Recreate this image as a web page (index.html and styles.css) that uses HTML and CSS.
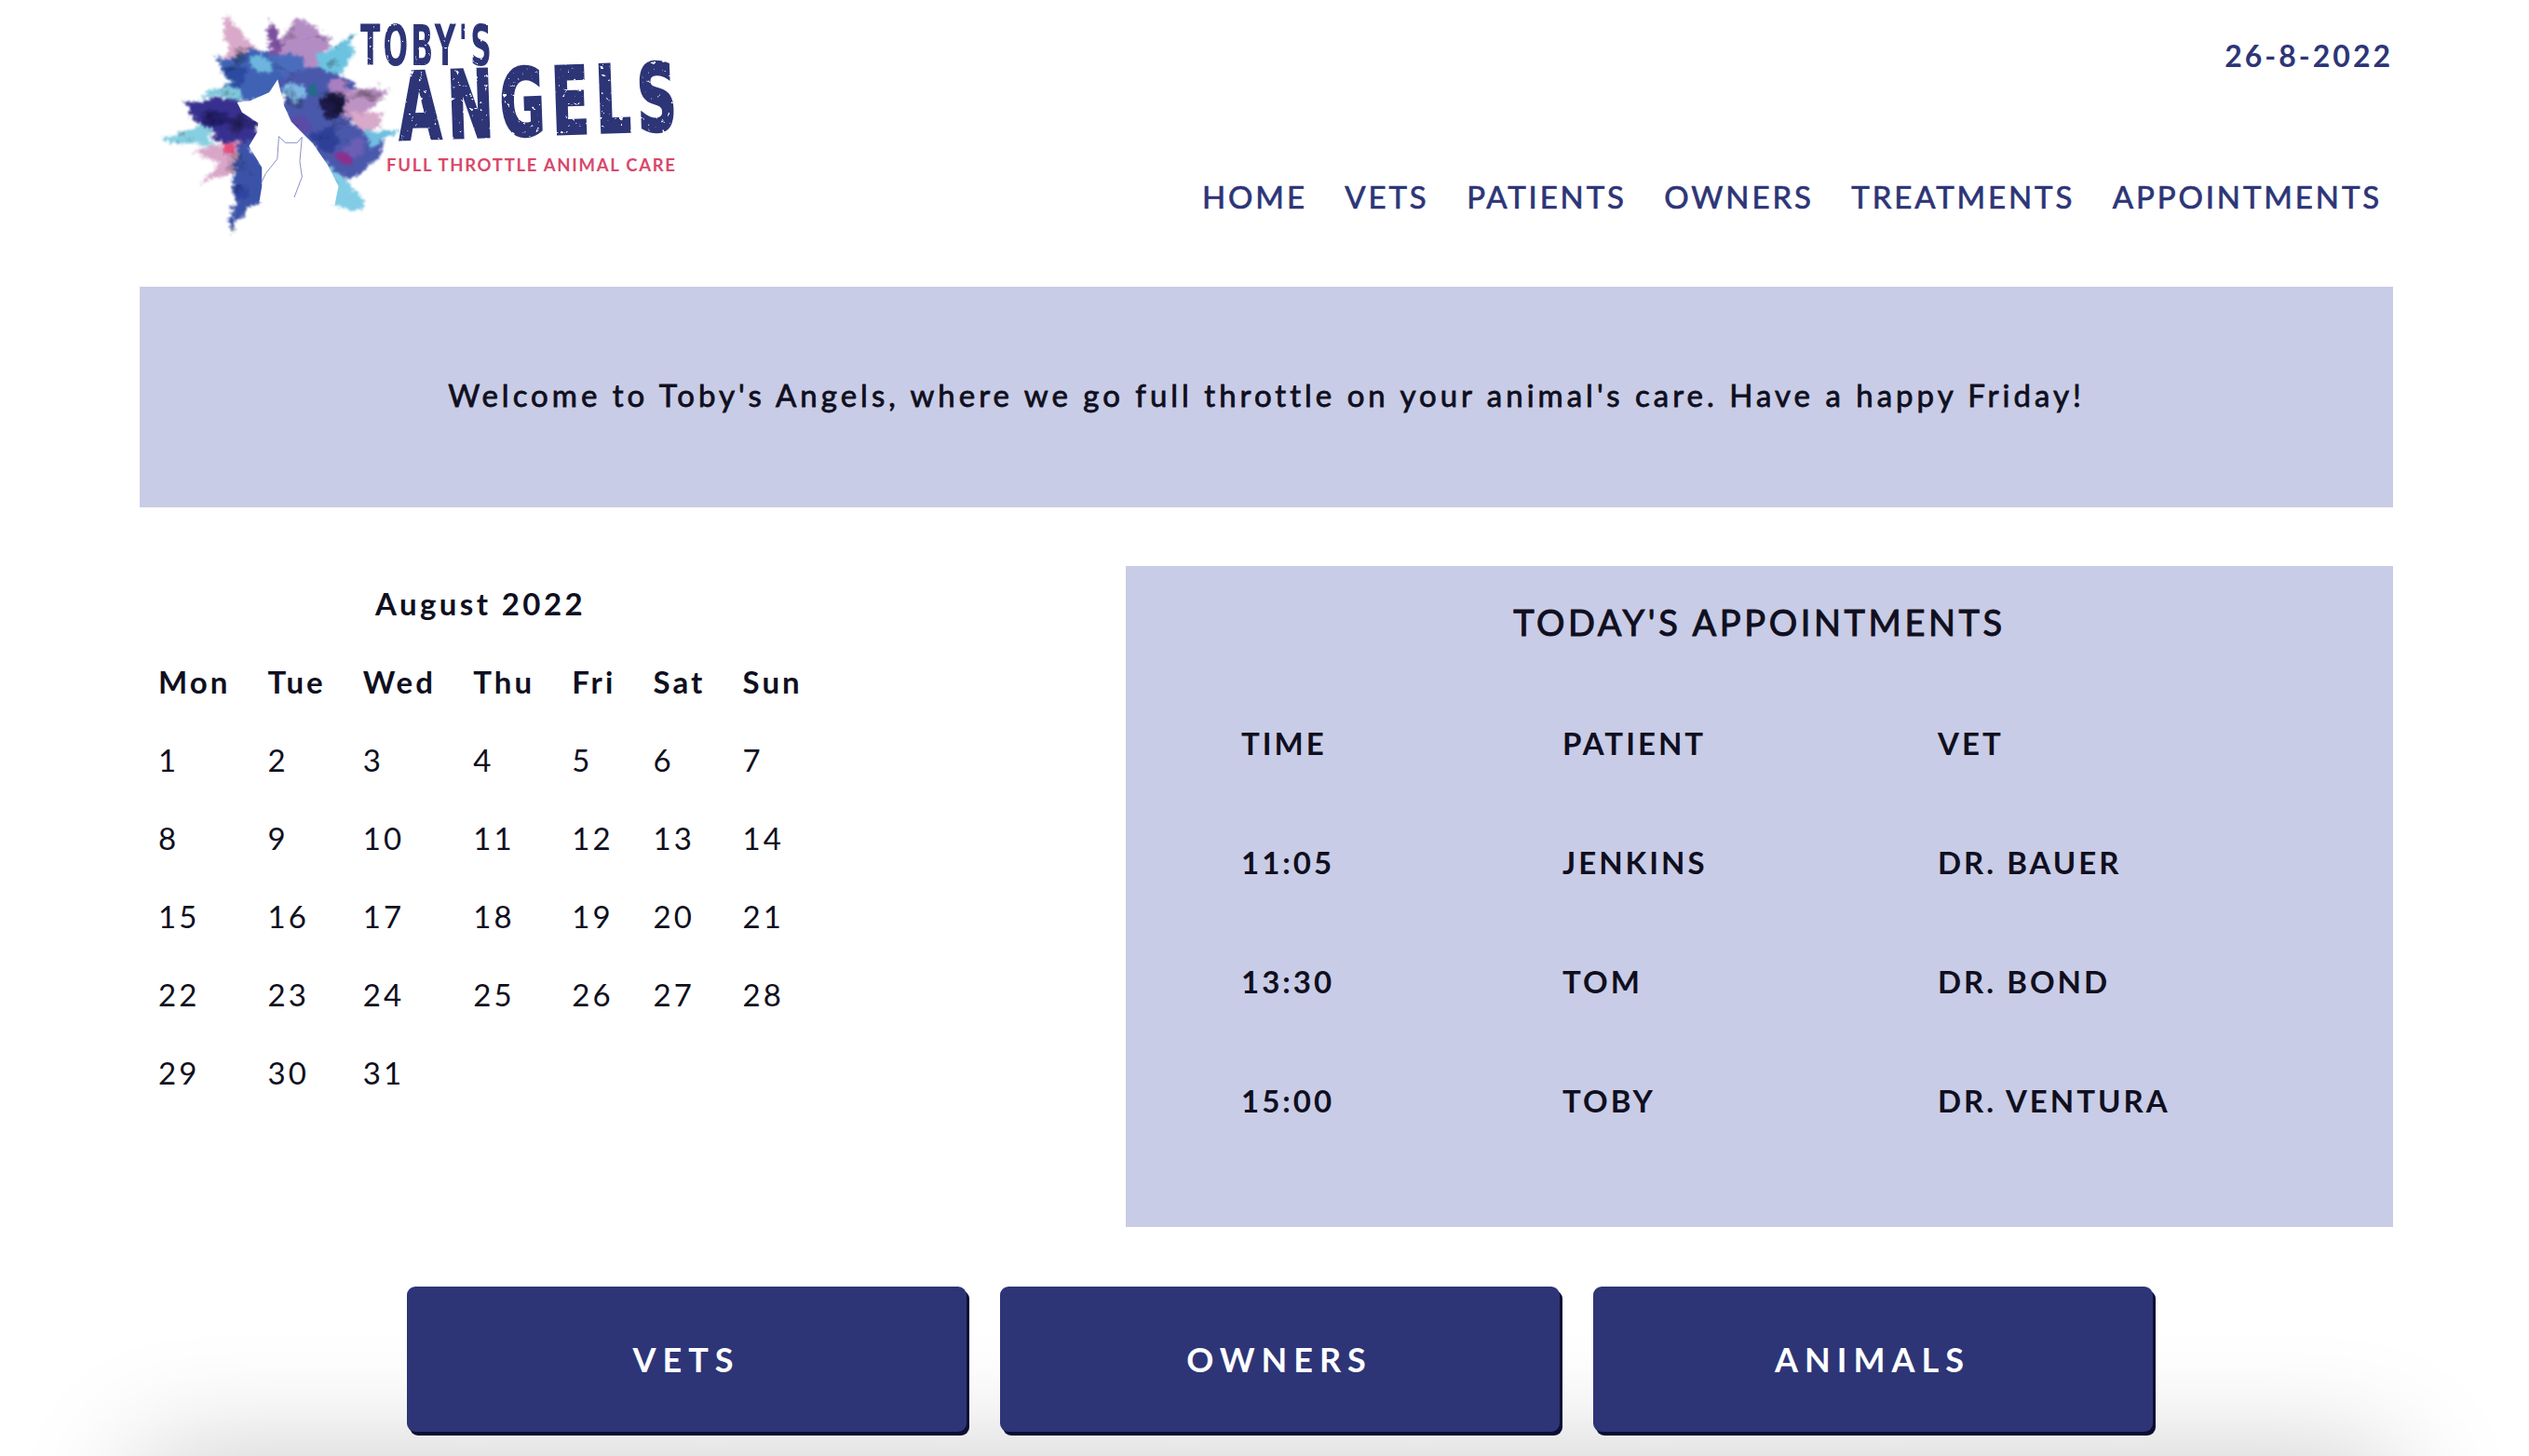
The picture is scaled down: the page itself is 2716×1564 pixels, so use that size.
FILE: index.html
```html
<!DOCTYPE html>
<html>
    <head>
        <link rel="stylesheet" href="styles.css">
    </head>
    <body>
        <header class="top">
            <div class="logo">
                <svg width="620" height="260" viewBox="0 0 620 260">
                    <defs>
                        <filter id="splash" x="-15%" y="-15%" width="130%" height="130%" color-interpolation-filters="sRGB">
                            <feTurbulence type="fractalNoise" baseFrequency="0.018 0.03" numOctaves="3" seed="7" result="broad"/>
                            <feDisplacementMap in="SourceGraphic" in2="broad" scale="50" xChannelSelector="R" yChannelSelector="G" result="moved"/>
                            <feTurbulence type="fractalNoise" baseFrequency="0.16" numOctaves="3" seed="11" result="fine"/>
                            <feDisplacementMap in="moved" in2="fine" scale="26" xChannelSelector="G" yChannelSelector="R"/>
                            <feGaussianBlur stdDeviation="2.4" result="soft"/>
                            <feTurbulence type="fractalNoise" baseFrequency="0.014" numOctaves="4" seed="3"/>
                            <feColorMatrix values="1.4 0 0 0 0.42  1.4 0 0 0 0.42  1.4 0 0 0 0.42  0 0 0 0 1" result="clouds"/>
                            <feComposite in="soft" in2="clouds" operator="arithmetic" k1="1"/>
                        </filter>
                        <filter id="worn" x="-5%" y="-5%" width="110%" height="110%" color-interpolation-filters="sRGB">
                            <feTurbulence type="fractalNoise" baseFrequency="0.2" numOctaves="3" seed="4"/>
                            <feColorMatrix values="0 0 0 0 0  0 0 0 0 0  0 0 0 0 0  11 0 0 0 -7.6" result="holes"/>
                            <feComposite in="SourceGraphic" in2="holes" operator="out"/>
                        </filter>
                    </defs>
                    <g transform="scale(0.3953 0.3333)">
                        <g filter="url(#splash)">
                            <polygon points="235,40 310,150 345,220 235,215" fill="#d9a9c9"/>
                            <polygon points="350,75 365,75 395,200 340,200" fill="#7d4f9f"/>
                            <polygon points="430,50 510,125 500,240 385,240 380,140" fill="#b48cc4"/>
                            <polygon points="580,105 480,190 500,270 570,220" fill="#6cc3e0"/>
                            <polygon points="340,170 430,180 480,240 385,262" fill="#4a6cbc"/>
                            <polygon points="210,185 345,165 395,255 352,305 300,332 240,295" fill="#3f62b4"/>
                            <polygon points="160,310 262,258 280,330" fill="#7fc8dc"/>
                            <polygon points="55,458 180,390 210,470" fill="#86cfe2"/>
                            <polygon points="145,490 305,440 295,545 170,595 215,520" fill="#d9a6c8"/>
                            <polygon points="120,325 270,325 330,400 310,480 210,440 165,405" fill="#37308f"/>
                            <polygon points="285,440 345,540 340,640 275,705 240,748 258,620 252,560" fill="#3a52a8"/>
                            <polygon points="375,245 470,215 580,255 575,400 670,440 630,525 575,580 520,560 460,470 400,395" fill="#4a58ac"/>
                            <polygon points="550,285 690,280 610,365 550,385" fill="#bd93c4"/>
                            <polygon points="565,365 670,365 605,432" fill="#d9a9c9"/>
                            <polygon points="605,405 690,418 635,478" fill="#70bfe0"/>
                            <polygon points="505,525 570,590 618,662 570,690 530,660" fill="#82cce6"/>
                            <circle cx="420" cy="300" r="32" fill="#7db8e4"/>
                            <circle cx="540" cy="280" r="26" fill="#a97fc0"/>
                            <circle cx="440" cy="400" r="30" fill="#5b4aa6"/>
                            <circle cx="500" cy="450" r="36" fill="#2e3f98"/>
                            <circle cx="590" cy="480" r="26" fill="#6a5fb5"/>
                            <circle cx="260" cy="240" r="34" fill="#2b4a9f"/>
                            <circle cx="330" cy="210" r="24" fill="#6cb6dd"/>
                            <circle cx="275" cy="620" r="24" fill="#2f43a0"/>
                            <circle cx="525" cy="340" r="36" fill="#1c1a48"/>
                            <circle cx="470" cy="290" r="16" fill="#1f6d88"/>
                            <circle cx="550" cy="505" r="24" fill="#8d2f8f"/>
                            <circle cx="245" cy="478" r="20" fill="#e2507e"/>
                            <circle cx="205" cy="385" r="30" fill="#241f6e"/>
                        </g>
                        <path d="M375 256 L352 298 L300 325 L265 330 L278 362 L322 396 L320 425 L297 470 L332 540 L332 600 L325 650 L530 660 L540 600 L510 530 L470 462 L412 392 L392 340 Z" fill="#ffffff"/>
                        <path d="M330 590 L342 560 L374 512 L378 440 L396 460 L428 460 L441 442 L435 520 L441 570 L420 636" fill="none" stroke="#8083c4" stroke-width="2.5"/>
                    </g>
                    <g filter="url(#worn)">
                        <text x="237" y="70" textLength="144" lengthAdjust="spacingAndGlyphs" class="logo-small">TOBY'S</text>
                        <text x="279" y="150" textLength="306" lengthAdjust="spacingAndGlyphs" transform="rotate(-2 279 150)" class="logo-big">ANGELS</text>
                    </g>
                    <text x="265" y="184" textLength="310" class="logo-tag">FULL THROTTLE ANIMAL CARE</text>
                </svg>
            </div>
            <div class="top-right">
                <div class="date">26-8-2022</div>
                <nav class="nav">
                    <a>HOME</a>
                    <a>VETS</a>
                    <a>PATIENTS</a>
                    <a>OWNERS</a>
                    <a>TREATMENTS</a>
                    <a>APPOINTMENTS</a>
                </nav>
            </div>
        </header>

        <section class="welcome">
            Welcome to Toby's Angels, where we go full throttle on your animal's care. Have a happy Friday!
        </section>

        <main class="middle">
            <div class="calendar">
                <div class="month">August 2022</div>
                <table class="cal">
                    <tr><th>Mon</th><th>Tue</th><th>Wed</th><th>Thu</th><th>Fri</th><th>Sat</th><th>Sun</th></tr>
                    <tr><td>1</td><td>2</td><td>3</td><td>4</td><td>5</td><td>6</td><td>7</td></tr>
                    <tr><td>8</td><td>9</td><td>10</td><td>11</td><td>12</td><td>13</td><td>14</td></tr>
                    <tr><td>15</td><td>16</td><td>17</td><td>18</td><td>19</td><td>20</td><td>21</td></tr>
                    <tr><td>22</td><td>23</td><td>24</td><td>25</td><td>26</td><td>27</td><td>28</td></tr>
                    <tr><td>29</td><td>30</td><td>31</td></tr>
                </table>
            </div>
            <div class="appts">
                <h2>TODAY'S APPOINTMENTS</h2>
                <div class="appt-grid">
                    <span>TIME</span><span>PATIENT</span><span>VET</span>
                    <span>11:05</span><span>JENKINS</span><span>DR. BAUER</span>
                    <span>13:30</span><span>TOM</span><span>DR. BOND</span>
                    <span>15:00</span><span>TOBY</span><span>DR. VENTURA</span>
                </div>
            </div>
        </main>

        <div class="buttons">
            <button class="btn">VETS</button>
            <button class="btn">OWNERS</button>
            <button class="btn">ANIMALS</button>
        </div>
        <footer class="foot"></footer>
    </body>
</html>
```

FILE: styles.css
```css
*{
    box-sizing: border-box;
    margin: 0;
}
html, body{
    height: 1564px;
    overflow: hidden;
}
body{
    padding: 0 146px 0 150px;
    background: white;
    font-family: "Lato", "Liberation Sans", sans-serif;
    color: #0f0f20;
}
.top{
    display: flex;
    justify-content: space-between;
    height: 308px;
}
.logo svg{
    display: block;
}
.logo-small{
    font-family: "DejaVu Sans", sans-serif;
    font-weight: bold;
    font-size: 60px;
    letter-spacing: 6px;
    fill: #2d3577;
}
.logo-big{
    font-family: "DejaVu Sans", sans-serif;
    font-weight: bold;
    font-size: 100px;
    letter-spacing: 12px;
    fill: #2d3577;
    stroke: #2d3577;
    stroke-width: 3px;
}
.logo-tag{
    font-size: 18.5px;
    font-weight: bold;
    fill: #d9486b;
}
.top-right{
    display: flex;
    flex-direction: column;
    align-items: flex-end;
}
.date{
    padding-top: 40px;
    font-size: 32px;
    font-weight: bold;
    letter-spacing: 3px;
    color: #2d3577;
}
.nav{
    display: flex;
    gap: 40.5px;
    padding: 112px 12px 0 0;
    font-size: 33px;
    letter-spacing: 2.9px;
    -webkit-text-stroke: 0.7px #2d3577;
    color: #2d3577;
}
.welcome{
    height: 237px;
    padding-bottom: 6px;
    background: #c9cce6;
    display: flex;
    align-items: center;
    justify-content: center;
    font-size: 33px;
    letter-spacing: 4px;
    -webkit-text-stroke: 0.8px #0f0f20;
}
.middle{
    display: flex;
    justify-content: space-between;
    padding-top: 63px;
}
.calendar{
    width: 800px;
    padding-top: 20px;
}
.month{
    width: 732px;
    text-align: center;
    font-size: 33px;
    font-weight: bold;
    letter-spacing: 3.4px;
}
.cal{
    border-collapse: collapse;
    margin-top: 22px;
    font-size: 33px;
    letter-spacing: 3.1px;
}
.cal th, .cal td{
    text-align: left;
    padding: 0 20px;
    height: 84px;
    font-weight: normal;
}
.cal th{
    font-weight: bold;
}
.appts{
    width: 1361px;
    height: 710px;
    background: #c9cce6;
    padding-top: 37px;
}
.appts h2{
    text-align: center;
    font-size: 38px;
    font-weight: normal;
    letter-spacing: 3.6px;
    -webkit-text-stroke: 1px #0f0f20;
}
.appt-grid{
    display: grid;
    grid-template-columns: 345px 403px 1fr;
    grid-auto-rows: 128px;
    padding: 87px 0 0 124px;
    font-size: 33px;
    font-weight: bold;
    letter-spacing: 3px;
}
.buttons{
    position: relative;
    z-index: 1;
    display: flex;
    justify-content: center;
    gap: 36px;
    padding: 64px 0 0 28px;
}
.btn{
    width: 601px;
    height: 156px;
    background: #2d3577;
    color: white;
    border: none;
    border-radius: 9px;
    box-shadow: 3px 4px 0 #0b0d33;
    font-family: "Lato", "Liberation Sans", sans-serif;
    font-size: 36px;
    font-weight: bold;
    letter-spacing: 7px;
}
/* empty box at the fold, only its shadow shows */
.foot{
    margin: 26px 60px 0;
    height: 0;
    box-shadow: 0 60px 130px 60px rgba(0, 0, 0, 0.22);
}
```
